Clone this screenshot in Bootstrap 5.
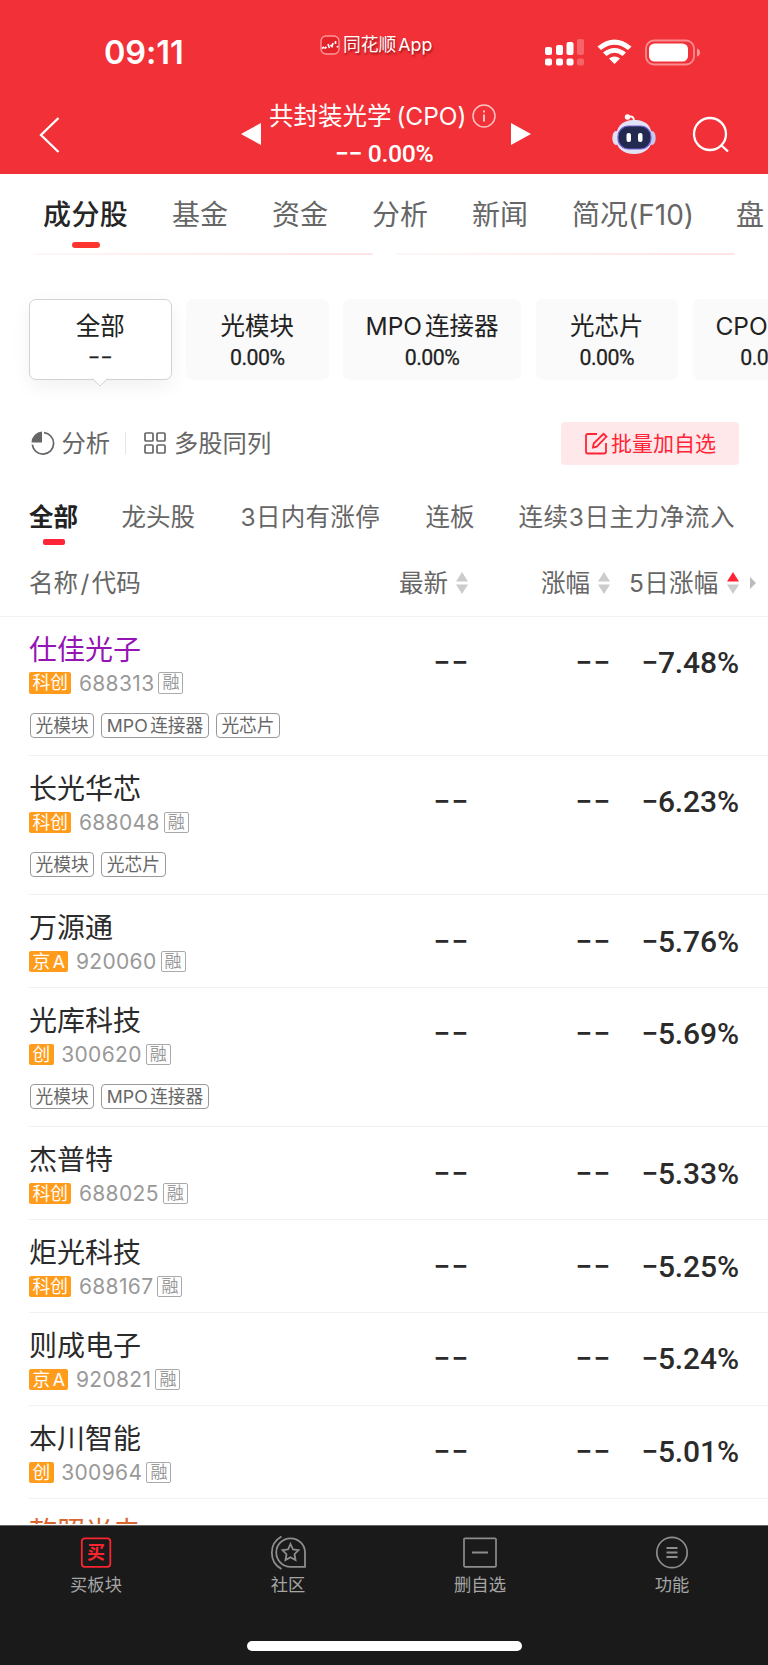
<!DOCTYPE html>
<html lang="zh-CN">
<head>
<meta charset="utf-8">
<meta name="viewport" content="width=device-width, initial-scale=1">
<title>共封装光学(CPO)</title>
<link href="https://cdn.jsdelivr.net/npm/bootstrap@5.3.0/dist/css/bootstrap.min.css" rel="stylesheet">
<style>
  body{font-family:Inter,"Noto Sans CJK SC",sans-serif;color:#2b2b2b;background:#fff;line-height:1;overflow:hidden}
  svg{display:block;flex:none}
  .phone{width:768px;height:1665px;overflow:hidden}
  .phone *{white-space:nowrap}
  .num{font-family:Roboto,sans-serif;font-weight:500}
  .topbar{background:#f23037;height:174px;color:#fff}
  .status-row{height:96px;padding:8px 0 0 104px}
  .clock{font-size:32.5px;font-weight:600;width:216px;letter-spacing:-.1px;padding-top:2px}
  .applabel{width:225px;margin-top:-15px;font-size:17.8px;text-shadow:1px 2px 2px rgba(90,0,0,.55);word-spacing:-3px}
  .title-row{height:78px}
  .title-mid{width:250px}
  .ttl{font-size:24.5px;height:40px}
  .ttl-sub{font-size:24.8px;letter-spacing:-.4px}
  .maintabs{height:79px;font-size:28px;color:#666;padding-left:43px}
  .maintabs>a{color:inherit;text-decoration:none;padding-top:27px;display:block;flex:none}
  .maintabs .on{color:#262626;font-weight:500;position:relative;letter-spacing:.4px}
  .maintabs .on::after{content:"";position:absolute;left:28.5px;top:68px;width:28px;height:6px;border-radius:3px;background:#ff3530}
  .strips{padding-left:33px;gap:22px;height:46px}
  .strips i{height:2px;width:340px;border-radius:0 0 12px 12px;background:linear-gradient(90deg,#fff6f6,#ffe3e5)}
  .chips{padding-left:29px;gap:14.5px;height:81px}
  .chip{height:81px;width:142.5px;flex:none;border-radius:7px;background:#fafafa;color:#222;font-size:24.5px;font-weight:400;padding-top:15px;text-align:center;position:relative}
  .chip .num{font-size:21.3px;margin-top:8.5px;letter-spacing:-.5px;font-weight:400;-webkit-text-stroke:.25px}
  .cjkmix{word-spacing:-4px}
  .chip.on{background:#fff;border:1px solid #d2d2d2;box-shadow:0 6px 20px rgba(0,0,0,.06);padding-top:14px}
  .chip.on .num{letter-spacing:.2px}
  .chip.on svg{position:absolute;left:62px;bottom:-8px}
  .tools{height:44px;margin-top:41px;padding:0 29px 0 31px;font-size:24.3px;color:#666}
  .addbtn{background:#ffe8ea;color:#ff2436;width:178px;height:43px;border-radius:4px;font-size:21px;padding-left:24px}
  .filters{height:80px;font-size:24.5px;color:#666;padding-left:29px}
  .filters>span{padding-top:40px;flex:none;position:relative}
  .filters .on{color:#222;font-weight:700}
  .filters .on::after{content:"";position:absolute;left:14px;top:74px;width:22px;height:5.5px;border-radius:2px;background:#ff2436}
  .thead-row{height:71.5px;font-size:24.5px;color:#666;padding:5px 12px 0 29px;border-bottom:1.5px solid #f3f3f3}
  .stock{height:139.3px;margin-left:29px;padding-top:19px;border-bottom:1.5px solid #f2f2f2}
  .stock.short{height:92.85px}
  .who{width:381px}
  .nm{font-size:28px;height:30px;line-height:29px}
  .visited .nm{color:#9415b4}
  .sub{margin-top:6.5px;height:22px}
  .mk{background:#ff9c1b;color:#fff;font-size:17.7px;height:21.5px;padding:0 3.5px;line-height:21.5px;border-radius:2px;margin-right:7.5px;word-spacing:-2.5px}
  .code{font-size:21px;color:#999;letter-spacing:.35px;margin-right:4px}
  .rz{border:1.3px solid #aaa;border-radius:2px;width:25px;height:21.5px;line-height:19.5px;font-size:17px;color:#999;text-align:center}
  .tags{margin:19px 0 0 1px;gap:7px}
  .tg{border:1.3px solid #999;border-radius:4px;height:25px;line-height:23px;padding:0 4.6px;font-size:17.7px;color:#666;word-spacing:-2.5px}
  .val{font-size:30px;padding-top:12.5px;text-align:right;letter-spacing:-.1px}
  .dash{letter-spacing:1px}
  .c1{width:59px}.c2{width:142px}.c3{width:128px}
  .dock{height:140px;background:#1a1a1a;color:#a5a5a5;font-size:17.3px;position:relative;border-top:1px solid #666}
  .dock .col{padding-top:10px}
  .lbl{margin-top:6px}
  .home{position:absolute;left:247px;top:115px;width:275px;height:10px;border-radius:5px;background:#fff}
  .list{height:907.5px;overflow:hidden}
</style>
</head>
<body>
<div class="phone d-flex flex-column">
  <header class="topbar flex-shrink-0">
    <div class="status-row d-flex align-items-center">
      <div class="clock">09:11</div>
      <div class="applabel d-flex align-items-center">
        <svg width="20" height="20" viewBox="0 0 20 20" style="margin-right:3px"><rect x="1" y="1" width="18" height="18" rx="5" fill="#e32329" stroke="#f99" stroke-width="1.3"/><path d="M2 13.500l2-1.500M4.500 13.500L6.500 12M8 9l1.500 4M10.500 10l1.500 1.500L13 8M15.500 6v3M17.500 11v1.500" fill="none" stroke="#fff" stroke-width="1.700"/></svg>
        <span>同花顺 App</span>
      </div>
      <svg width="156" height="28" viewBox="0 0 156 28" fill="#fff">
        <rect x="0" y="9" width="7" height="8" rx="2"/><rect x="11" y="7" width="7" height="10" rx="2"/><rect x="21.500" y="4" width="7" height="13" rx="2"/><rect x="32" y="1" width="7" height="16" rx="2" opacity=".25"/>
        <rect x="0" y="20.500" width="7" height="7" rx="2"/><rect x="11" y="20.500" width="7" height="7" rx="2"/><rect x="21.500" y="20.500" width="7" height="7" rx="2"/><rect x="32" y="20.500" width="7" height="7" rx="2" opacity=".25"/>
        <path d="M52.500 8.500Q69.500-5.500 86.500 8.500L83 12Q69.500 1.500 56 12ZM58 14.500Q69.500 5.500 81 14.500L77.500 18Q69.500 11.500 61.500 18ZM64 20.500Q69.500 16.500 75 20.500L69.500 26Z"/>
        <rect x="101" y="2.500" width="48" height="24" rx="8" fill="none" stroke="#fff" stroke-opacity=".45" stroke-width="1.800"/><rect x="104" y="5.500" width="39" height="18" rx="5.500"/><path d="M152 10.500q3 1 3 4t-3 4z" opacity=".5"/>
      </svg>
    </div>
    <div class="title-row d-flex">
      <svg width="22" height="38" viewBox="0 0 22 38" style="margin:20px 0 0 39px"><path d="M19.500 2L2 19L19.500 36" fill="none" stroke="#fff" stroke-width="2.300"/></svg>
      <svg width="20" height="22" viewBox="0 0 20 22" style="margin:27px 0 0 180px"><path d="M20 0V22L0 11z" fill="#fff"/></svg>
      <div class="title-mid">
        <div class="ttl d-flex align-items-center ps-2">
          <span style="width:203px;word-spacing:-2px">共封装光学 (CPO)</span>
          <svg width="24" height="24" viewBox="0 0 24 24" fill="none" stroke="#fff" stroke-opacity=".7" stroke-width="1.500"><circle cx="12" cy="12" r="11"/><path d="M12 10.500V17.500M12 6.500V8.500" stroke-width="2"/></svg>
        </div>
        <div class="ttl-sub num" style="margin:6px 0 0 74px">−− 0.00%</div>
      </div>
      <svg width="20" height="22" viewBox="0 0 20 22" style="margin-top:27px"><path d="M0 0V22L20 11z" fill="#fff"/></svg>
      <svg width="44" height="42" viewBox="0 0 44 42" style="margin:17px 0 0 81px">
        <path d="M16 4Q22 2 22 8" fill="none" stroke="#fff" stroke-width="2"/><circle cx="15.500" cy="4" r="2.700" fill="#fff"/>
        <ellipse cx="4" cy="25" rx="3.700" ry="7" fill="#dfe0f5"/><ellipse cx="40" cy="25" rx="3.700" ry="7" fill="#c6c8ec"/>
        <path d="M22 7C36 7 40 15 40 25S33 41 22 41S4 35 4 25S9 7 22 7Z" fill="#e3e3f7"/><rect x="6" y="13" width="33" height="23" rx="10.500" fill="#222a50" stroke="#7262d4" stroke-width="1.200"/>
        <rect x="14.500" y="20" width="4.500" height="9" rx="2" fill="#fff"/><rect x="26" y="20" width="4.500" height="9" rx="2" fill="#fff"/></svg>
      <svg width="38" height="38" viewBox="0 0 38 38" style="margin:20px 0 0 36px"><g fill="none" stroke="#fff" stroke-width="2.300"><circle cx="18" cy="18" r="16"/><path d="M29 29L36 35.500"/></g></svg>
    </div>
  </header>

  <nav class="maintabs d-flex flex-shrink-0 overflow-hidden">
    <a class="on" style="width:129px">成分股</a><a style="width:100px">基金</a><a style="width:100px">资金</a><a style="width:100px">分析</a><a style="width:100px">新闻</a><a style="width:164px">简况(F10)</a><a>盘</a>
  </nav>
  <div class="strips d-flex flex-shrink-0"><i></i><i></i></div>

  <div class="chips d-flex flex-shrink-0">
    <div class="chip on">全部<div class="num">−−</div><svg width="16" height="9" viewBox="0 0 16 9"><path d="M0 0H16L8 8z" fill="#fff"/><path d="M.5 .7L8 8L15.500 .7" fill="none" stroke="#d2d2d2"/></svg></div>
    <div class="chip">光模块<div class="num">0.00%</div></div>
    <div class="chip" style="width:178px"><span class="cjkmix">MPO 连接器</span><div class="num">0.00%</div></div>
    <div class="chip">光芯片<div class="num">0.00%</div></div>
    <div class="chip" style="width:150px"><span class="cjkmix">CPO 概念</span><div class="num">0.00%</div></div>
  </div>

  <div class="tools d-flex align-items-center flex-shrink-0">
    <svg width="24" height="24" viewBox="0 0 24 24"><path d="M11 .5V11.500H.5A11 11 0 0 1 11 .5Z" fill="#666"/><path d="M13 1.700A10.700 10.700 0 1 1 1.300 13.700" fill="none" stroke="#666" stroke-width="1.700"/></svg>
    <span style="width:63px;padding-left:6.500px">分析</span>
    <span style="width:1.500px;height:22px;background:#e4e4e4;margin:0 18px 0 6.500px"></span>
    <svg width="22" height="22" viewBox="0 0 22 22" fill="none" stroke="#666" stroke-width="1.700"><rect x="1" y="1" width="8" height="8" rx="1"/><rect x="13" y="1" width="8" height="8" rx="1"/><rect x="1" y="13" width="8" height="8" rx="1"/><rect x="13" y="13" width="8" height="8" rx="1"/></svg>
    <span style="padding-left:8px">多股同列</span>
    <div class="addbtn d-flex align-items-center ms-auto">
      <svg width="23" height="23" viewBox="0 0 23 23" fill="none" stroke="#ff2436" stroke-width="1.800" style="margin-right:3px"><path d="M12 2H3Q1 2 1 4V19.500Q1 21.500 3 21.500H19Q21 21.500 21 19.500V11"/><path d="M8 15.500L8.700 11.500L18.500 1.800L21.500 4.600L11.700 14.700Z"/></svg>批量加自选</div>
  </div>

  <div class="filters d-flex flex-shrink-0">
    <span class="on" style="width:92.500px">全部</span><span style="width:119px">龙头股</span><span style="width:185px;letter-spacing:.3px">3日内有涨停</span><span style="width:93px">连板</span><span style="letter-spacing:.6px">连续3日主力净流入</span>
  </div>

  <div class="thead-row d-flex align-items-center flex-shrink-0">
    <span style="width:370px">名称<span style="padding:0 2.500px">/</span>代码</span>
    <span style="width:57px">最新</span><svg width="12" height="22" viewBox="0 0 12 22" fill="#ccc"><path d="M6 0L12 9.500H0zM6 22L12 12.500H0z"/></svg>
    <span style="width:57px;margin-left:73px">涨幅</span><svg width="12" height="22" viewBox="0 0 12 22" fill="#ccc"><path d="M6 0L12 9.500H0zM6 22L12 12.500H0z"/></svg>
    <span style="width:98px;margin-left:19px;letter-spacing:.3px">5日涨幅</span><svg width="12" height="22" viewBox="0 0 12 22" fill="#ccc"><path d="M6 0L12 9.500H0z" fill="#ff2436"/><path d="M6 22L12 12.500H0z"/></svg>
    <svg width="6" height="12" viewBox="0 0 6 12" style="margin-left:11px" fill="#bbb"><path d="M0 0L6 6L0 12z"/></svg>
  </div>

  <main class="list flex-shrink-0">
    <div class="stock visited d-flex"><div class="who"><div class="nm">仕佳光子</div><div class="sub d-flex align-items-center"><span class="mk">科创</span><span class="code">688313</span><span class="rz">融</span></div><div class="tags d-flex"><span class="tg">光模块</span><span class="tg">MPO 连接器</span><span class="tg">光芯片</span></div></div><div class="val num dash c1">−−</div><div class="val num dash c2">−−</div><div class="val num c3">−7.48%</div></div>
    <div class="stock d-flex"><div class="who"><div class="nm">长光华芯</div><div class="sub d-flex align-items-center"><span class="mk">科创</span><span class="code">688048</span><span class="rz">融</span></div><div class="tags d-flex"><span class="tg">光模块</span><span class="tg">光芯片</span></div></div><div class="val num dash c1">−−</div><div class="val num dash c2">−−</div><div class="val num c3">−6.23%</div></div>
    <div class="stock short d-flex"><div class="who"><div class="nm">万源通</div><div class="sub d-flex align-items-center"><span class="mk">京 A</span><span class="code">920060</span><span class="rz">融</span></div></div><div class="val num dash c1">−−</div><div class="val num dash c2">−−</div><div class="val num c3">−5.76%</div></div>
    <div class="stock d-flex"><div class="who"><div class="nm">光库科技</div><div class="sub d-flex align-items-center"><span class="mk">创</span><span class="code">300620</span><span class="rz">融</span></div><div class="tags d-flex"><span class="tg">光模块</span><span class="tg">MPO 连接器</span></div></div><div class="val num dash c1">−−</div><div class="val num dash c2">−−</div><div class="val num c3">−5.69%</div></div>
    <div class="stock short d-flex"><div class="who"><div class="nm">杰普特</div><div class="sub d-flex align-items-center"><span class="mk">科创</span><span class="code">688025</span><span class="rz">融</span></div></div><div class="val num dash c1">−−</div><div class="val num dash c2">−−</div><div class="val num c3">−5.33%</div></div>
    <div class="stock short d-flex"><div class="who"><div class="nm">炬光科技</div><div class="sub d-flex align-items-center"><span class="mk">科创</span><span class="code">688167</span><span class="rz">融</span></div></div><div class="val num dash c1">−−</div><div class="val num dash c2">−−</div><div class="val num c3">−5.25%</div></div>
    <div class="stock short d-flex"><div class="who"><div class="nm">则成电子</div><div class="sub d-flex align-items-center"><span class="mk">京 A</span><span class="code">920821</span><span class="rz">融</span></div></div><div class="val num dash c1">−−</div><div class="val num dash c2">−−</div><div class="val num c3">−5.24%</div></div>
    <div class="stock short d-flex"><div class="who"><div class="nm">本川智能</div><div class="sub d-flex align-items-center"><span class="mk">创</span><span class="code">300964</span><span class="rz">融</span></div></div><div class="val num dash c1">−−</div><div class="val num dash c2">−−</div><div class="val num c3">−5.01%</div></div>
    <div class="stock short d-flex"><div class="who"><div class="nm" style="color:#d9672f">乾照光电</div></div></div>
  </main>

  <footer class="dock flex-shrink-0 mt-auto">
    <div class="row g-0 text-center">
      <div class="col d-flex flex-column align-items-center"><svg width="36" height="34" viewBox="0 0 36 34"><rect x="3.800" y="2.300" width="28.500" height="28.500" rx="3" fill="none" stroke="#fa2530" stroke-width="1.800"/><text x="18" y="23" font-size="18" font-weight="700" text-anchor="middle" fill="#fa2530">买</text></svg><span class="lbl">买板块</span></div>
      <div class="col d-flex flex-column align-items-center"><svg width="36" height="34" viewBox="0 0 36 34" fill="none" stroke="#8d8d8d" stroke-width="1.800"><path d="M20.500 2.300A14.200 14.200 0 0 0 20.500 30.800H35V16.500A14.300 14.300 0 0 0 20.500 2.300Z"/><path d="M11.500 .5A18.500 18.500 0 0 0 11.500 33"/><path d="M20.500 8L23 13.500L28.500 14.200L24.500 18.200L25.500 24L20.500 21.200L15.500 24L16.500 18.200L12.500 14.200L18 13.500Z"/></svg><span class="lbl">社区</span></div>
      <div class="col d-flex flex-column align-items-center"><svg width="36" height="34" viewBox="0 0 36 34" fill="none" stroke="#8d8d8d" stroke-width="1.700"><rect x="2" y="2.300" width="32" height="28.500" rx="1"/><path d="M10 16.500H26" stroke-width="2"/></svg><span class="lbl">删自选</span></div>
      <div class="col d-flex flex-column align-items-center"><svg width="36" height="34" viewBox="0 0 36 34" fill="none" stroke="#8d8d8d" stroke-width="1.700"><circle cx="18" cy="16.500" r="15.200"/><path d="M12.500 12H23.500M12.500 16.500H23.500M12.500 21H23.500" stroke-width="2"/></svg><span class="lbl">功能</span></div>
    </div>
    <div class="home"></div>
  </footer>
</div>
<script src="https://cdn.jsdelivr.net/npm/bootstrap@5.3.0/dist/js/bootstrap.bundle.min.js"></script>
</body>
</html>
